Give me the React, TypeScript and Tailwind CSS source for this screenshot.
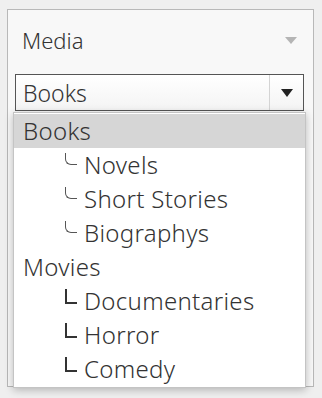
import React from 'react';

type Item = { label: string; depth: 0 | 1; style?: 'soft' | 'hard' };

const items: Item[] = [
  { label: 'Books', depth: 0 },
  { label: 'Novels', depth: 1, style: 'soft' },
  { label: 'Short Stories', depth: 1, style: 'soft' },
  { label: 'Biographys', depth: 1, style: 'soft' },
  { label: 'Movies', depth: 0 },
  { label: 'Documentaries', depth: 1, style: 'hard' },
  { label: 'Horror', depth: 1, style: 'hard' },
  { label: 'Comedy', depth: 1, style: 'hard' },
];

const Connector = ({ style }: { style?: 'soft' | 'hard' }) =>
  style === 'soft' ? (
    <span className="mb-[12px] mr-[7px] h-[12px] w-[12px] rounded-bl-[6px] border-b border-l border-[#555]" />
  ) : (
    <span className="mb-[10px] mr-[7px] h-[15px] w-[12px] border-b-2 border-l-2 border-[#333]" />
  );

export default function App() {
  const selected = 'Books';

  return (
    <div
      className="relative h-[398px] w-[322px] overflow-hidden bg-[#efefef] pt-[9px] pl-[7px]"
      style={{ fontFamily: '"Noto Sans", sans-serif' }}
    >
      <div className="h-[378px] w-[307px] border border-[#b8b8b8] bg-[#f8f8f8] px-[7px]">
        {/* header */}
        <div className="flex h-[64px] items-center justify-between pb-[4px] pl-[7px] pr-[9px]">
          <span className="text-[22px] font-light text-[#333]">Media</span>
          <svg width="12" height="7" viewBox="0 0 12 7">
            <path d="M0 0 L12 0 L6 7 Z" fill="#b5b5b5" />
          </svg>
        </div>

        {/* select */}
        <div className="flex h-[37px] w-[289px] items-stretch border border-[#555] bg-gradient-to-b from-white to-[#f4f4f4]">
          <div className="flex flex-1 items-center pl-[7px] pt-[1px] text-[23px] font-light text-[#333]">
            {selected}
          </div>
          <div className="flex w-[34px] items-center justify-center border-l border-[#d4d4d4]">
            <svg width="12" height="8" viewBox="0 0 12 8">
              <path d="M0 0 L12 0 L6 8 Z" fill="#222" />
            </svg>
          </div>
        </div>
      </div>

      {/* dropdown menu */}
      <div className="absolute left-[13px] top-[112px] w-[293px] border border-[#c4c4c4] bg-white pt-[1px] pb-[1px] shadow-[0_2px_8px_rgba(0,0,0,0.25)]">
        {items.map((item) => (
          <div
            key={item.label}
            className={
              'flex h-[34px] items-center text-[24px] font-light tracking-[0.3px] text-[#333] ' +
              (item.label === selected ? 'bg-[#d6d6d6] ' : '') +
              (item.depth === 0 ? 'pl-[9px]' : 'pl-[51px]')
            }
          >
            {item.depth === 1 && <Connector style={item.style} />}
            <span>{item.label}</span>
          </div>
        ))}
      </div>
    </div>
  );
}
